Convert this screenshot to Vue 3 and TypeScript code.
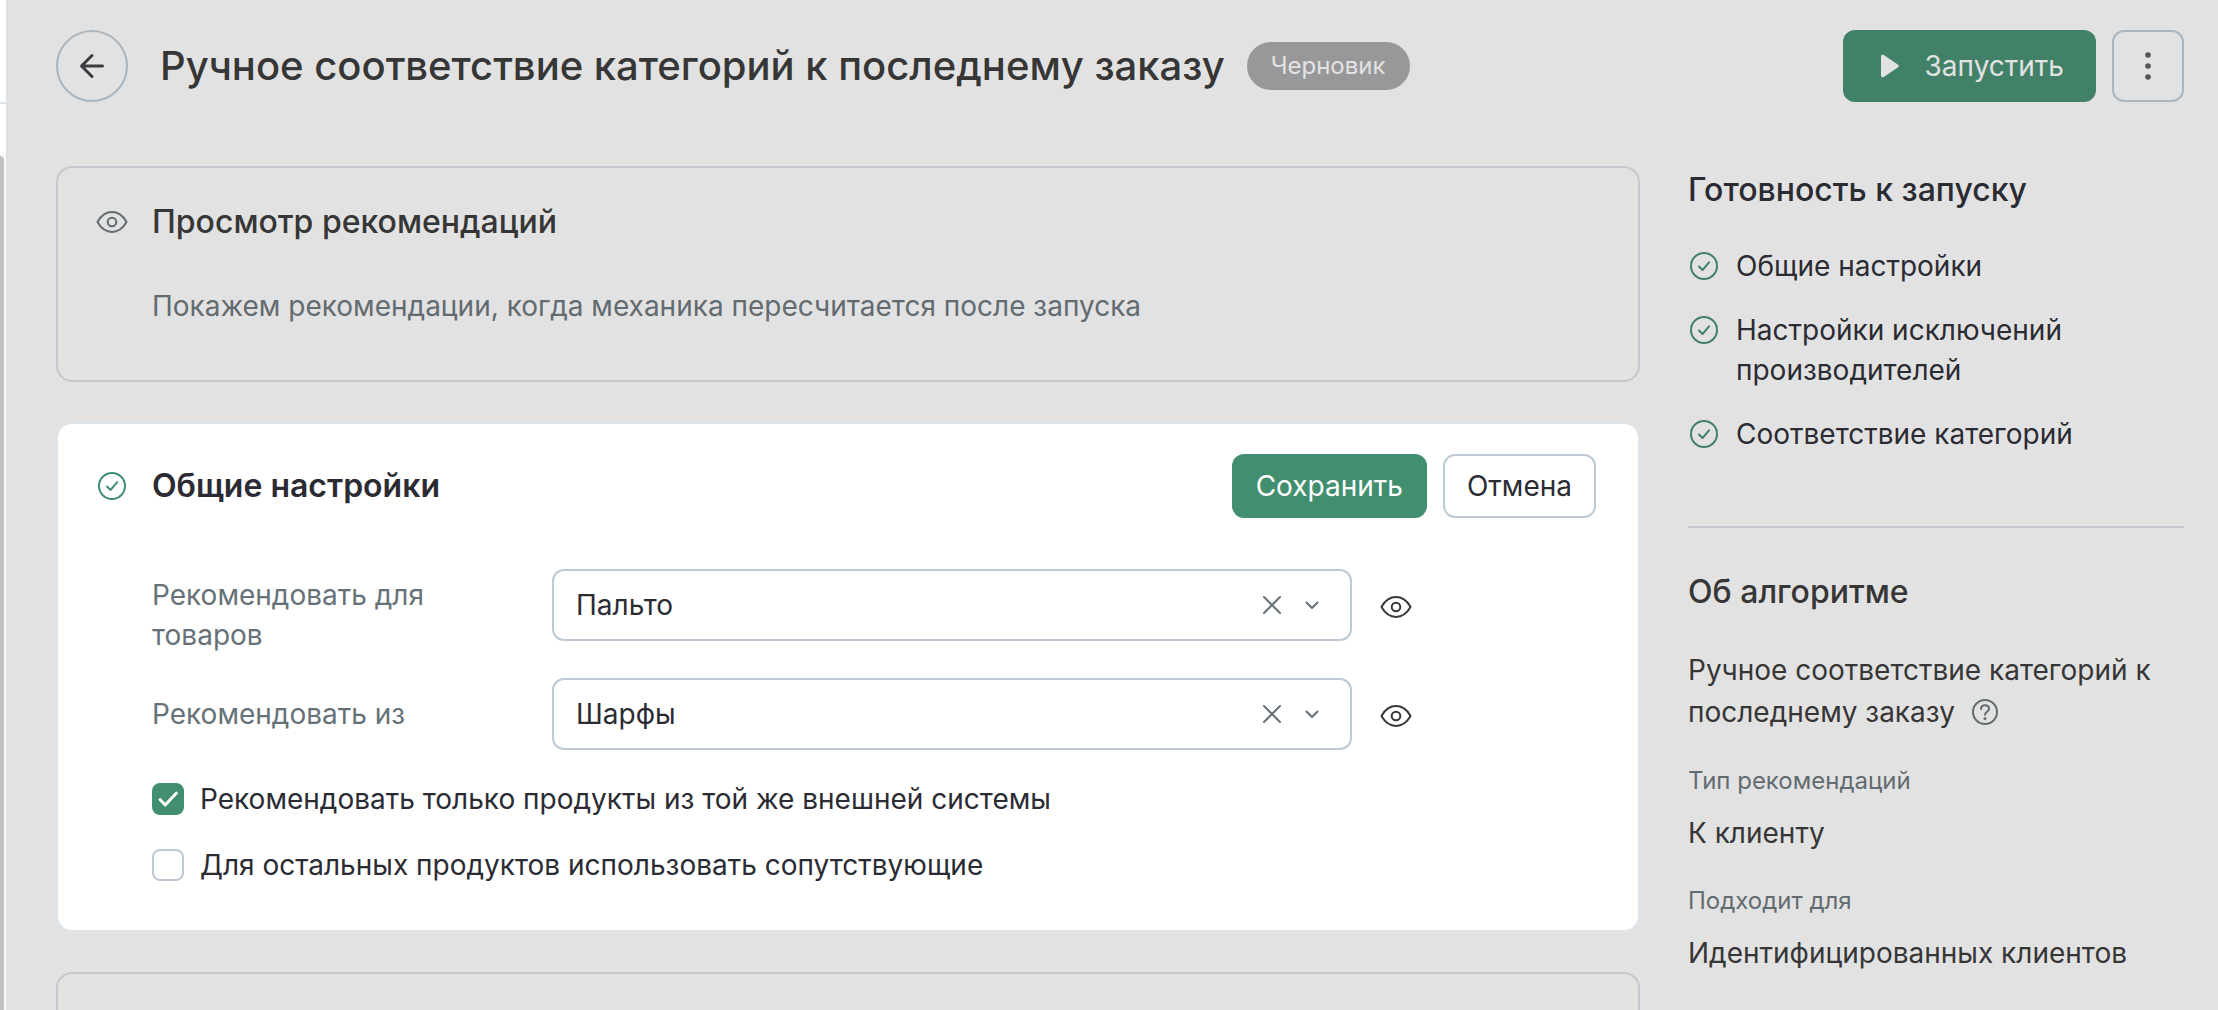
<script setup lang="ts">
import { reactive, ref } from 'vue'

interface Field {
  id: string
  label: string
  value: string
}

const fields = reactive<Field[]>([
  { id: 'target', label: 'Рекомендовать для товаров', value: 'Пальто' },
  { id: 'source', label: 'Рекомендовать из', value: 'Шарфы' },
])
const categories: string[] = ['Пальто', 'Шарфы']

const sameSystem = ref<boolean>(true)
const useRelated = ref<boolean>(false)

const readiness: string[] = [
  'Общие настройки',
  'Настройки исключений производителей',
  'Соответствие категорий',
]

const facts: { term: string; value: string }[] = [
  { term: 'Тип рекомендаций', value: 'К клиенту' },
  { term: 'Подходит для', value: 'Идентифицированных клиентов' },
]
</script>

<template>
  <div class="shell">
    <div class="gutter">
      <div class="gutter-head"></div>
      <div class="gutter-track"><div class="thumb"></div></div>
    </div>

    <div class="page">
      <header class="header">
        <button class="back" type="button" aria-label="Назад">
          <svg width="28" height="28" viewBox="0 0 28 28" fill="none" stroke="currentColor" stroke-width="3" stroke-linecap="round" stroke-linejoin="round">
            <path d="M24.500 14H4M14 3.500L3.500 14L14 24.500" />
          </svg>
        </button>
        <h1>Ручное соответствие категорий к последнему заказу</h1>
        <span class="badge">Черновик</span>
        <div class="actions">
          <button class="launch" type="button">
            <svg width="18" height="24" viewBox="0 0 18 24" fill="currentColor">
              <path d="M0 2.500C0 .8 1.400 .2 2.800 1L16.800 10.400C18.200 11.400 18.200 12.600 16.800 13.600L2.800 23C1.400 23.800 0 23.200 0 21.500Z" />
            </svg>
            Запустить
          </button>
          <button class="more" type="button" aria-label="Ещё">
            <svg width="6" height="28" viewBox="0 0 6 28" fill="currentColor">
              <circle cx="3" cy="3" r="2.800" /><circle cx="3" cy="14" r="2.800" /><circle cx="3" cy="25" r="2.800" />
            </svg>
          </button>
        </div>
      </header>

      <div class="columns">
        <main class="main">
          <section class="card preview">
            <div class="card-head">
              <svg class="mark" width="32" height="32" viewBox="0 0 32 32" fill="none" stroke="currentColor" stroke-width="2">
                <path d="M1.800 16.600Q1.300 16 1.800 15.400C5.500 9 10.300 6 16 6S26.500 9 30.200 15.400Q30.700 16 30.200 16.600C26.500 23 21.700 26 16 26S5.500 23 1.800 16.600Z" />
                <circle cx="16" cy="16" r="4.300" />
              </svg>
              <h2>Просмотр рекомендаций</h2>
            </div>
            <p class="hint">Покажем рекомендации, когда механика пересчитается после запуска</p>
          </section>

          <section class="card active">
            <div class="card-head">
              <svg class="mark ok" width="32" height="32" viewBox="0 0 32 32" fill="none" stroke="currentColor" stroke-width="2" stroke-linecap="round" stroke-linejoin="round">
                <circle cx="16" cy="16" r="13" /><path d="M11 16.500L14.500 20L21.200 12.200" />
              </svg>
              <h2>Общие настройки</h2>
              <div class="card-actions">
                <button class="save" type="button">Сохранить</button>
                <button class="cancel" type="button">Отмена</button>
              </div>
            </div>

            <form class="form">
              <div v-for="field in fields" :key="field.id" class="field">
                <label :for="field.id">{{ field.label }}</label>
                <div class="control">
                  <select :id="field.id" v-model="field.value">
                    <option v-for="name in categories" :key="name" :value="name">{{ name }}</option>
                  </select>
                  <button class="clear" type="button" aria-label="Очистить" @click="field.value = ''">
                    <svg width="20" height="20" viewBox="0 0 20 20" fill="none" stroke="currentColor" stroke-width="2" stroke-linecap="round">
                      <path d="M2 2L18 18M18 2L2 18" />
                    </svg>
                  </button>
                  <svg class="chevron" width="16" height="16" viewBox="0 0 16 16" fill="none" stroke="currentColor" stroke-width="2" stroke-linecap="round" stroke-linejoin="round">
                    <path d="M2.500 5.500L8 11L13.500 5.500" />
                  </svg>
                </div>
                <button class="peek" type="button" aria-label="Просмотр">
                  <svg width="32" height="32" viewBox="0 0 32 32" fill="none" stroke="currentColor" stroke-width="2">
                    <path d="M1.800 16.600Q1.300 16 1.800 15.400C5.500 9 10.300 6 16 6S26.500 9 30.200 15.400Q30.700 16 30.200 16.600C26.500 23 21.700 26 16 26S5.500 23 1.800 16.600Z" />
                    <circle cx="16" cy="16" r="4.300" />
                  </svg>
                </button>
              </div>

              <div class="checks">
                <label class="check">
                  <input v-model="sameSystem" type="checkbox" />
                  <svg v-if="sameSystem" class="tick" width="32" height="32" viewBox="0 0 32 32" fill="none" stroke="currentColor" stroke-width="3" stroke-linecap="round" stroke-linejoin="round">
                    <path d="M8 16.500L13.200 22L24.500 10" />
                  </svg>
                  <span>Рекомендовать только продукты из той же внешней системы</span>
                </label>
                <label class="check">
                  <input v-model="useRelated" type="checkbox" />
                  <svg v-if="useRelated" class="tick" width="32" height="32" viewBox="0 0 32 32" fill="none" stroke="currentColor" stroke-width="3" stroke-linecap="round" stroke-linejoin="round">
                    <path d="M8 16.500L13.200 22L24.500 10" />
                  </svg>
                  <span>Для остальных продуктов использовать сопутствующие</span>
                </label>
              </div>
            </form>
          </section>

          <section class="card next"></section>
        </main>

        <aside class="aside">
          <h2 class="ready-title">Готовность к запуску</h2>
          <ul class="ready">
            <li v-for="item in readiness" :key="item">
              <svg width="32" height="32" viewBox="0 0 32 32" fill="none" stroke="currentColor" stroke-width="2" stroke-linecap="round" stroke-linejoin="round">
                <circle cx="16" cy="16" r="13" /><path d="M11 16.500L14.500 20L21.200 12.200" />
              </svg>
              <span>{{ item }}</span>
            </li>
          </ul>
          <hr />
          <h2>Об алгоритме</h2>
          <p class="about">
            Ручное соответствие категорий к последнему заказу
            <svg class="help" width="28" height="28" viewBox="0 0 28 28" fill="none" stroke="currentColor" stroke-width="2" stroke-linecap="round">
              <circle cx="14" cy="14" r="12" />
              <path d="M10 11C10 8.600 11.700 7.200 14 7.200S18 8.600 18 10.800C18 13.800 14 13.600 14 16.800" />
              <circle cx="14" cy="20.600" r=".6" />
            </svg>
          </p>
          <dl>
            <template v-for="fact in facts" :key="fact.term">
              <dt>{{ fact.term }}</dt>
              <dd>{{ fact.value }}</dd>
            </template>
          </dl>
        </aside>
      </div>
    </div>
  </div>
</template>

<style>
body {
  margin: 0;
  background: #e2e2e2;
}
</style>

<style scoped>
* {
  box-sizing: border-box;
}
.shell {
  display: flex;
  height: 100vh;
  overflow: hidden;
  font: 28px/40px Inter, 'Noto Sans', sans-serif;
  color: #2b2b33;
}
h1,
h2,
p,
ul,
dl,
dd {
  margin: 0;
  padding: 0;
}
h1 {
  font-size: 40px;
  line-height: 48px;
  font-weight: 500;
  color: #363636;
}
h2 {
  font-size: 32px;
  line-height: 40px;
  font-weight: 500;
  color: #363636;
}
button,
select {
  font: inherit;
  color: inherit;
  background: none;
  border: 0;
  margin: 0;
  padding: 0;
}
svg {
  display: block;
  flex: none;
}

.gutter {
  flex: none;
  width: 6px;
  display: flex;
  flex-direction: column;
  background: #fff;
}
.gutter-head {
  height: 104px;
  border-bottom: 2px solid #dce3e9;
}
.gutter-track {
  flex: 1;
  margin-top: 48px;
  padding: 4px 2px 0 0;
  background: #fafafa;
  display: flex;
}
.thumb {
  flex: 1;
  border-top-right-radius: 4px;
  background: #c1c1c1;
}

.page {
  flex: 1;
  min-width: 0;
  padding: 30px 34px 0 48px;
  border-left: 2px solid #dde1e4;
  background: #e2e2e2;
}
.header {
  display: flex;
  align-items: center;
}
.back {
  display: grid;
  place-items: center;
  width: 72px;
  height: 72px;
  margin-right: 32px;
  border: 2px solid #a9b5bf;
  border-radius: 50%;
  color: #3c3c40;
}
.badge {
  margin-left: 22px;
  padding: 0 24px;
  border-radius: 24px;
  background: #98989a;
  color: #e2e2e2;
  font-size: 24px;
  line-height: 48px;
}
.actions {
  display: flex;
  gap: 16px;
  margin-left: auto;
}
.launch {
  display: flex;
  align-items: center;
  gap: 26px;
  height: 72px;
  padding: 0 32px 0 38px;
  border-radius: 12px;
  background: #418167;
  color: #e2e2e2;
}
.more {
  display: grid;
  place-items: center;
  width: 72px;
  height: 72px;
  border: 2px solid #a9b5bf;
  border-radius: 12px;
  color: #555;
}

.columns {
  display: flex;
  align-items: flex-start;
  gap: 48px;
  margin-top: 64px;
}
.main {
  flex: 1;
  min-width: 0;
  display: flex;
  flex-direction: column;
  gap: 40px;
}
.card {
  border: 2px solid #c2c8ce;
  border-radius: 16px;
}
.card-head {
  display: flex;
  align-items: center;
}
.mark {
  margin-right: 24px;
  color: #626b70;
}
.ok {
  color: #418f6e;
}
.preview {
  padding: 34px 42px 54px 38px;
}
.hint {
  margin: 44px 0 0 56px;
  color: #626b70;
}
.active {
  padding: 30px 42px 45px 38px;
  border-color: #dce3e9;
  background: #fff;
}
.active h2 {
  font-weight: 600;
  color: #2b2b33;
}
.card-actions {
  display: flex;
  gap: 16px;
  margin-left: auto;
}
.save,
.cancel {
  height: 64px;
  padding: 0 24px;
  border-radius: 12px;
}
.save {
  background: #418f6e;
  color: #fff;
}
.cancel {
  padding: 0 22px;
  border: 2px solid #bdc9d4;
}
.form {
  display: flex;
  flex-direction: column;
  gap: 17px;
  margin: 51px 0 0 56px;
}
.field {
  display: flex;
  align-items: flex-start;
}
.field label {
  display: flex;
  align-items: center;
  width: 400px;
  min-height: 72px;
  padding: 6px 96px 6px 0;
  color: #667278;
}
.control {
  position: relative;
  flex: 0 1 800px;
}
.control select {
  appearance: none;
  display: block;
  width: 100%;
  height: 72px;
  padding: 0 104px 0 22px;
  border: 2px solid #bdc9d4;
  border-radius: 12px;
  background: #fff;
}
.clear,
.chevron {
  position: absolute;
  top: 0;
  bottom: 0;
  margin: auto 0;
  color: #667278;
}
.clear {
  right: 70px;
  height: 20px;
}
.chevron {
  right: 32px;
  pointer-events: none;
}
.peek {
  display: grid;
  place-items: center;
  height: 76px;
  margin: 0 0 -4px 28px;
  color: #36363b;
}
.checks {
  display: flex;
  flex-direction: column;
  gap: 26px;
  margin-top: 12px;
}
.check {
  position: relative;
  display: flex;
  align-items: center;
  gap: 16px;
}
.check input {
  appearance: none;
  flex: none;
  width: 32px;
  height: 32px;
  margin: 0;
  border: 2px solid #bdc9d4;
  border-radius: 8px;
  background: #fff;
}
.check input:checked {
  border-color: #418f6e;
  background: #418f6e;
}
.tick {
  position: absolute;
  left: 0;
  color: #fff;
  pointer-events: none;
}
.next {
  height: 216px;
}

.aside {
  flex: none;
  width: 496px;
  padding-top: 4px;
}
.ready-title {
  color: #2b2b33;
}
.ready {
  display: flex;
  flex-direction: column;
  gap: 24px;
  margin-top: 36px;
  list-style: none;
}
.ready li {
  display: flex;
  gap: 16px;
}
.ready svg {
  margin-top: 4px;
  color: #418167;
}
hr {
  height: 2px;
  margin: 72px 0 44px;
  border: 0;
  background: #c2c8ce;
}
.about {
  margin-top: 37px;
  line-height: 42px;
  color: #363636;
}
.help {
  display: inline-block;
  vertical-align: -4px;
  margin-left: 8px;
  color: #626b70;
}
dt {
  margin-top: 32px;
  font-size: 24px;
  line-height: 32px;
  color: #626b70;
}
dd {
  margin-top: 16px;
  color: #363636;
}
</style>
